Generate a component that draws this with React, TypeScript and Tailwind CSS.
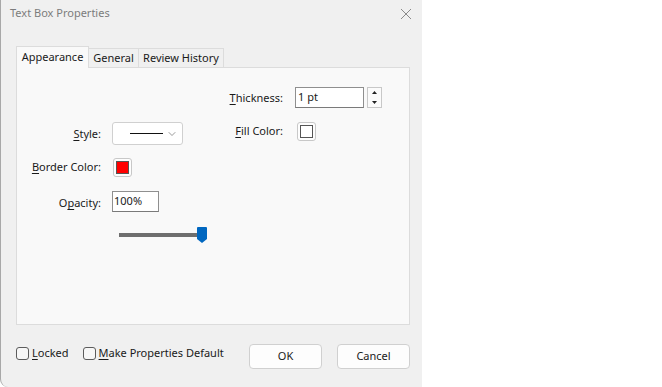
import { ChevronDown } from 'lucide-react'

const font = { fontFamily: '"Noto Sans", "Open Sans", sans-serif' }

function Key({ k, rest }: { k: string; rest: string }) {
  return (
    <span>
      <span className="underline underline-offset-2">{k}</span>
      {rest}
    </span>
  )
}

function Swatch({ color }: { color?: string }) {
  return (
    <div className="flex h-[19px] w-[19px] items-center justify-center rounded-[3px] border border-[#c8c8c8] bg-[#fdfdfd]">
      <div className={`h-[13px] w-[13px] border border-[#555] ${color ? 'bg-[#ff0000]' : 'bg-white'}`} />
    </div>
  )
}

export default function App() {
  return (
    <div className="flex h-[387px] w-[662px] bg-white text-[11px] text-[#1a1a1a]" style={font}>
      <div className="flex w-[422px] flex-col rounded-bl-[8px] border-l border-[#a8a8a8] bg-[#f0f0f0]">
        {/* title bar */}
        <div className="flex h-[27px] items-center justify-between pl-[9px] pr-[10px]">
          <span className="text-[11px] text-[#7c7c7c]">Text Box Properties</span>
          <svg width="12" height="12" viewBox="0 0 12 12" className="text-[#8a8a8a]">
            <path d="M1 1 L11 11 M11 1 L1 11" stroke="currentColor" strokeWidth="1" />
          </svg>
        </div>

        {/* tabs */}
        <div className="mt-[19px] flex items-end pl-[15px]">
          <div className="z-10 -mb-px flex h-[22px] w-[73px] items-center justify-center border border-b-0 border-[#dcdcdc] bg-[#f9f9f9]">
            Appearance
          </div>
          <div className="flex h-[19px] w-[50px] items-center justify-center border border-l-0 border-b-0 border-[#dcdcdc] bg-[#f0f0f0]">
            General
          </div>
          <div className="flex h-[19px] w-[85px] items-center justify-center border border-l-0 border-b-0 border-[#dcdcdc] bg-[#f0f0f0]">
            Review History
          </div>
        </div>

        {/* panel */}
        <div className="ml-[15px] mr-[12px] flex h-[258px] flex-col border border-[#dcdcdc] bg-[#f9f9f9] pt-[19px]">
          {/* thickness */}
          <div className="flex h-[21px] items-center">
            <div className="w-[278px] pr-[12px] pt-[1px] text-right">
              <Key k="T" rest="hickness:" />
            </div>
            <div className="flex h-[21px] w-[69px] items-center border border-[#8f8f8f] border-b-[#7a7a7a] bg-white pl-[2px]">
              1 pt
            </div>
            <div className="ml-[3px] flex h-[21px] w-[15px] flex-col justify-between border border-[#c8c8c8] bg-[#fbfbfb]">
              <svg width="13" height="9" viewBox="0 0 13 9">
                <path d="M4 6 L6.5 3 L9 6 Z" fill="#222" />
              </svg>
              <svg width="13" height="9" viewBox="0 0 13 9">
                <path d="M4 3 L6.5 6 L9 3 Z" fill="#222" />
              </svg>
            </div>
          </div>

          {/* style / fill color */}
          <div className="mt-[14px] flex items-start">
            <div className="flex h-[23px] w-[84px] items-center justify-end pt-[1px]">
              <Key k="S" rest="tyle:" />
            </div>
            <div className="ml-[11px] flex h-[23px] w-[71px] items-center justify-between rounded-[3px] border border-[#d0d0d0] bg-white pl-[17px] pr-[4px]">
              <div className="h-px w-[33px] bg-[#111]" />
              <ChevronDown size={12} strokeWidth={1.2} className="text-[#555]" />
            </div>
            <div className="flex h-[19px] w-[114px] items-center justify-end pr-[14px]">
              <Key k="F" rest="ill Color:" />
            </div>
            <Swatch />
          </div>

          {/* border color */}
          <div className="mt-[13px] flex items-center">
            <div className="w-[84px] text-right">
              <Key k="B" rest="order Color:" />
            </div>
            <div className="ml-[12px]">
              <Swatch color="red" />
            </div>
          </div>

          {/* opacity */}
          <div className="mt-[14px] flex items-center">
            <div className="w-[84px] pt-[4px] text-right">
              O<span className="underline underline-offset-2">p</span>acity:
            </div>
            <div className="ml-[11px] flex h-[21px] w-[47px] items-center border border-[#8f8f8f] border-b-[#7a7a7a] bg-white pl-[1px]">
              100%
            </div>
          </div>

          {/* slider */}
          <div className="mt-[15px] flex h-[16px] items-center pl-[102px]">
            <div className="h-[4px] w-[80px] bg-[#6e6e6e]" />
            <svg width="10" height="16" viewBox="0 0 10 16" className="-ml-[2px]">
              <path d="M0 1 Q0 0 1 0 L9 0 Q10 0 10 1 L10 12 L5 16 L0 12 Z" fill="#0067c0" />
            </svg>
          </div>
        </div>

        {/* footer */}
        <div className="mt-[19px] flex items-start pl-[15px] pr-[12px]">
          <div className="mt-[1px] flex items-center">
            <div className="h-[13px] w-[13px] rounded-[3px] border border-[#5c5c5c] bg-[#f7f7f7]" />
            <span className="ml-[3px]">
              <Key k="L" rest="ocked" />
            </span>
            <div className="ml-[14px] h-[13px] w-[13px] rounded-[3px] border border-[#5c5c5c] bg-[#f7f7f7]" />
            <span className="ml-[3px]">
              <Key k="M" rest="ake Properties Default" />
            </span>
          </div>
          <div className="ml-auto flex gap-[15px]">
            <button className="h-[25px] w-[73px] rounded-[4px] border border-[#d0d0d0] bg-[#fdfdfd] text-[11px]">OK</button>
            <button className="h-[25px] w-[73px] rounded-[4px] border border-[#d0d0d0] bg-[#fdfdfd] text-[11px]">Cancel</button>
          </div>
        </div>
      </div>
    </div>
  )
}
